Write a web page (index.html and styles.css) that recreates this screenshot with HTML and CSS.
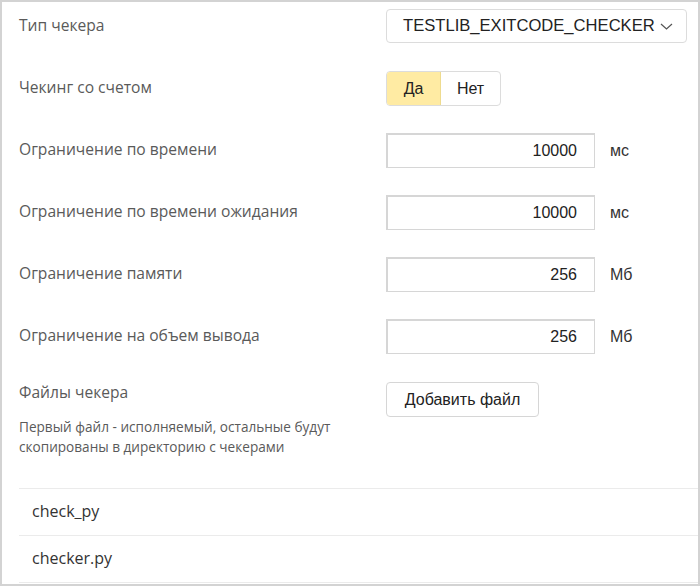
FILE: index.html
```html
<!doctype html>
<html lang="ru">
<head>
    <meta charset="UTF-8">
    <meta name="viewport" content="width=device-width, initial-scale=1.0">
    <title>Настройки чекера</title>
    <link rel="stylesheet" href="styles.css">
</head>
<body>
<div class="panel">
    <div class="form">
        <div class="row">
            <div class="label">Тип чекера</div>
            <div class="select">
                <span>TESTLIB_EXITCODE_CHECKER</span>
                <svg class="chevron" width="13" height="7" viewBox="0 0 13 7">
                    <path d="M1 1l5.5 5 5.5-5" fill="none" stroke="#555" stroke-width="1.2"/>
                </svg>
            </div>
        </div>

        <div class="row">
            <div class="label">Чекинг со счетом</div>
            <div class="toggle">
                <span class="toggle_item toggle_item-active">Да</span>
                <span class="toggle_item">Нет</span>
            </div>
        </div>

        <div class="row">
            <div class="label">Ограничение по времени</div>
            <div class="input">10000</div>
            <div class="unit">мс</div>
        </div>

        <div class="row">
            <div class="label">Ограничение по времени ожидания</div>
            <div class="input">10000</div>
            <div class="unit">мс</div>
        </div>

        <div class="row">
            <div class="label">Ограничение памяти</div>
            <div class="input">256</div>
            <div class="unit">Мб</div>
        </div>

        <div class="row">
            <div class="label">Ограничение на объем вывода</div>
            <div class="input">256</div>
            <div class="unit">Мб</div>
        </div>

        <div class="row row-files">
            <div class="files_info">
                <div class="label">Файлы чекера</div>
                <div class="hint">Первый файл - исполняемый, остальные будут<br>скопированы в директорию с чекерами</div>
            </div>
            <div class="button">Добавить файл</div>
        </div>
    </div>

    <ul class="files">
        <li class="files_item">check_py</li>
        <li class="files_item">checker.py</li>
    </ul>
</div>
</body>
</html>
```

FILE: styles.css
```css
body {
    margin: 0;
    padding: 0;
    background: #fff;
}

.panel {
    box-sizing: border-box;
    width: 700px;
    height: 586px;
    border: 2px solid #d3d3d3;
    padding: 7px 0 0 17px;
    overflow: hidden;
    font-family: "Open Sans", "Noto Sans", sans-serif;
}

.form {
    display: flex;
    flex-direction: column;
    gap: 27px;
}

.row {
    display: flex;
    align-items: center;
    min-height: 35px;
}

.label {
    width: 367px;
    flex-shrink: 0;
    padding-bottom: 4px;
    font-size: 15.6px;
    line-height: 20px;
    color: #5a5a5a;
}

.select,
.input,
.button,
.toggle {
    box-sizing: border-box;
    font-family: "Liberation Sans", Arial, sans-serif;
    font-size: 16px;
    color: #222;
    background: #fff;
}

.select {
    display: flex;
    align-items: center;
    justify-content: space-between;
    width: 301px;
    height: 34px;
    margin-bottom: 1px;
    padding: 0 13px 0 16px;
    border: 1px solid #dcdcdc;
    border-radius: 4px;
    font-size: 16.6px;
}

.chevron {
    margin-left: 3px;
}

.toggle {
    display: flex;
    height: 35px;
    border: 1px solid #dcdcdc;
    border-radius: 4px;
    overflow: hidden;
}

.toggle_item {
    display: flex;
    align-items: center;
    justify-content: center;
    width: 59px;
}

.toggle_item-active {
    width: 53px;
    background: #ffeba3;
    border-right: 1px solid #eedb8f;
}

.input {
    display: flex;
    align-items: center;
    justify-content: flex-end;
    width: 209px;
    height: 35px;
    padding-right: 17px;
    border: 1px solid #d6d6d6;
    border-top-width: 2px;
    border-left-width: 2px;
}

.unit {
    margin-left: 15px;
    font-family: "Liberation Sans", Arial, sans-serif;
    font-size: 16px;
    color: #333;
}

.row-files {
    align-items: flex-start;
    margin-top: 1px;
}

.files_info .label {
    padding-bottom: 0;
}

.hint {
    margin-top: 15px;
    font-size: 13.6px;
    line-height: 20px;
    color: #5a5a5a;
}

.button {
    display: flex;
    align-items: center;
    justify-content: center;
    width: 153px;
    height: 35px;
    border: 1px solid #d6d6d6;
    border-radius: 4px;
}

.files {
    list-style: none;
    margin: 31px 0 0;
    padding: 0;
}

.files_item {
    height: 46px;
    line-height: 45px;
    padding-left: 13px;
    border-top: 1px solid #ebebeb;
    font-size: 16px;
    color: #333;
}

.files_item:last-child {
    border-bottom: 1px solid #ebebeb;
}
```
